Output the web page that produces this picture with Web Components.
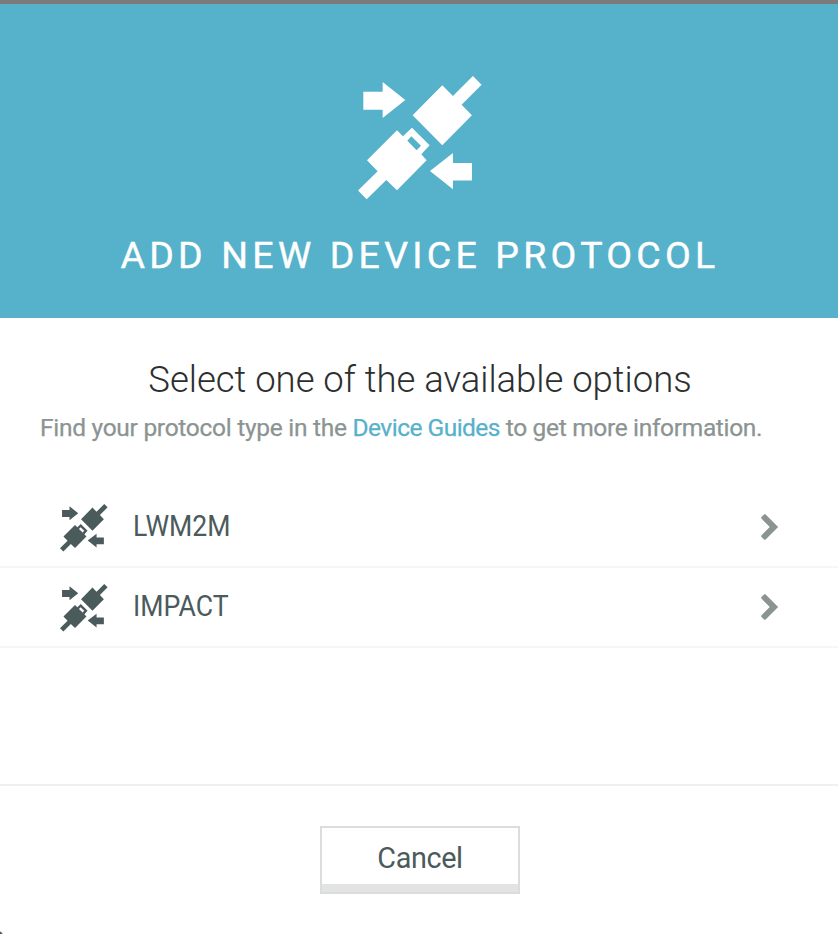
<!DOCTYPE html>
<html lang="en">
<head>
<meta charset="utf-8">
<title>Add new device protocol</title>
<style>
html,body{margin:0;height:100%;background:#fff;overflow:hidden}
body{font-family:Roboto,"Liberation Sans",sans-serif}
</style>
</head>
<body>
<protocol-dialog>
  <dialog-header slot="header">ADD NEW DEVICE PROTOCOL</dialog-header>
  <dialog-intro slot="intro">
    <span slot="title">Select one of the available options</span>
    <span>Find your protocol type in the</span> <a>Device Guides</a> <span>to get more information.</span>
  </dialog-intro>
  <protocol-option>LWM2M</protocol-option>
  <protocol-option>IMPACT</protocol-option>
  <cancel-button slot="footer">Cancel</cancel-button>
</protocol-dialog>
<script>
const define = (name, html) => {
  const t = document.createElement('template');
  t.innerHTML = html;
  customElements.define(name, class extends HTMLElement {
    constructor() {
      super();
      this.attachShadow({mode: 'open'}).append(t.content.cloneNode(true));
    }
  });
};

define('plug-icon', `<style>
:host{display:block;width:47.6px;height:47.6px;flex:none}
svg{display:block;width:100%;height:100%}
</style>
<svg viewBox="54 48 371 371" fill="currentColor">
<path d="M70 95H128V66L196 120L128 174V149H70Z"/>
<path d="M396 309H339V279L270 333L339 388V362H396Z"/>
<path d="M399 48L425 74L365 134L396 166L307 256L218 166L307 76L339 108Z"/>
<path fill-rule="evenodd" d="M216 203L269 256L244 283L260 301L171 391L139 360L80 418L54 392L113 334L81 301L171 211L189 229ZM214 229L202 242L230 271L243 257Z"/>
</svg>`);

define('chevron-icon', `<style>:host{display:block;width:17px;height:26px}svg{display:block}</style>
<svg width="17" height="26" viewBox="0 0 17 26"><path d="M4.6 .7L16.9 13L4.6 25.3Q3.8 26 3 25.3L.7 23Q0 22.2 .7 21.4L9 13L.7 4.6Q0 3.8 .7 3L3 .7Q3.8 0 4.6 .7Z" fill="#8b9492" stroke="#8b9492" stroke-width=".5"/></svg>`);

define('dialog-header', `<style>
:host{display:flex;flex-direction:column;align-items:center;box-sizing:border-box;height:318px;border-top:4px solid #7b7b7b;padding-top:72px;background:#56b1cb;color:#fff}
plug-icon{width:123.6px;height:123.6px;margin-left:2px}
h1{margin:31.4px 0 0 2px;font-size:37.5px;line-height:48px;font-weight:400;letter-spacing:4.25px;word-spacing:.8px;white-space:nowrap;-webkit-text-stroke:.4px currentColor}
</style><plug-icon></plug-icon><h1><slot></slot></h1>`);

define('dialog-intro', `<style>
:host{display:block;height:170px;box-sizing:border-box;padding:38px 40px 0;color:#8b9492;white-space:nowrap}
h2{margin:0 0 0 2px;text-align:center;font-size:36.5px;line-height:48px;font-weight:300;color:#2d2f2f;letter-spacing:-.03px}
p{margin:8px 0 0;font-size:24.5px;line-height:32px;font-weight:400;letter-spacing:-.28px;-webkit-text-stroke:.25px currentColor}
::slotted(a){color:#56b1cb;letter-spacing:-.52px;-webkit-text-stroke:.25px currentColor}
::slotted(span:last-child){letter-spacing:-.33px}
</style><h2><slot name="title"></slot></h2><p><slot></slot></p>`);

define('protocol-option', `<style>
:host{display:flex;align-items:center;box-sizing:border-box;height:80px;border-bottom:2px solid #f5f6f6;padding:0 60px;color:#4b5a5b}
plug-icon{margin-top:2px}
.label{margin:-2px 0 0 25.4px;flex:1;font-size:28.8px;line-height:40px;transform:scaleX(.925);transform-origin:left}
</style><plug-icon></plug-icon><span class="label"><slot></slot></span><chevron-icon></chevron-icon>`);

define('cancel-button', `<style>
:host{display:block}
button{display:block;box-sizing:border-box;width:200px;height:68px;padding:0 0 4px;border:2px solid #d9dedd;background:#fff;box-shadow:inset 0 -8px #e3e3e3;color:#4b5a5b;font:400 28.8px/40px Roboto,"Liberation Sans",sans-serif;letter-spacing:-.4px}
</style><button><slot></slot></button>`);

define('protocol-dialog', `<style>
:host{display:flex;flex-direction:column;height:934px;background:#fff}
main{flex:1}
footer{display:flex;justify-content:center;box-sizing:border-box;height:150px;padding:40px 0 0 2px;border-top:2px solid #eff0f0;background:radial-gradient(circle at 0 100%,#555 1.5px,transparent 3px)}
</style><slot name="header"></slot><slot name="intro"></slot><main><slot></slot></main><footer><slot name="footer"></slot></footer>`);
</script>
</body>
</html>
